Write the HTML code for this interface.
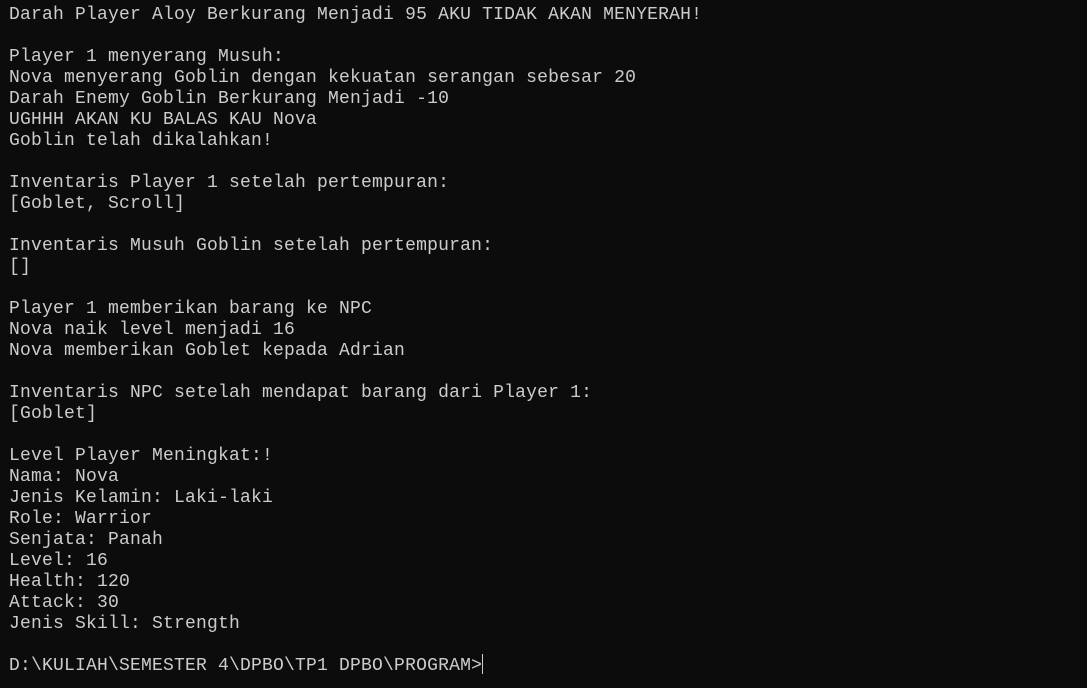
<!DOCTYPE html>
<html><head><meta charset="utf-8"><style>
html,body{margin:0;padding:0;background:#0c0c0c;width:1087px;height:688px;overflow:hidden}
pre{margin:0;position:absolute;left:9px;top:5px;font-family:"Liberation Mono",monospace;font-size:18px;letter-spacing:0.2px;line-height:21px;color:#cccccc}
.c{position:absolute;left:482px;top:654px;width:1px;height:20px;background:#cccccc}
</style></head><body><pre>Darah Player Aloy Berkurang Menjadi 95 AKU TIDAK AKAN MENYERAH!

Player 1 menyerang Musuh:
Nova menyerang Goblin dengan kekuatan serangan sebesar 20
Darah Enemy Goblin Berkurang Menjadi -10
UGHHH AKAN KU BALAS KAU Nova
Goblin telah dikalahkan!

Inventaris Player 1 setelah pertempuran:
[Goblet, Scroll]

Inventaris Musuh Goblin setelah pertempuran:
[]

Player 1 memberikan barang ke NPC
Nova naik level menjadi 16
Nova memberikan Goblet kepada Adrian

Inventaris NPC setelah mendapat barang dari Player 1:
[Goblet]

Level Player Meningkat:!
Nama: Nova
Jenis Kelamin: Laki-laki
Role: Warrior
Senjata: Panah
Level: 16
Health: 120
Attack: 30
Jenis Skill: Strength

D:\KULIAH\SEMESTER 4\DPBO\TP1 DPBO\PROGRAM&gt;</pre><div class="c"></div></body></html>
